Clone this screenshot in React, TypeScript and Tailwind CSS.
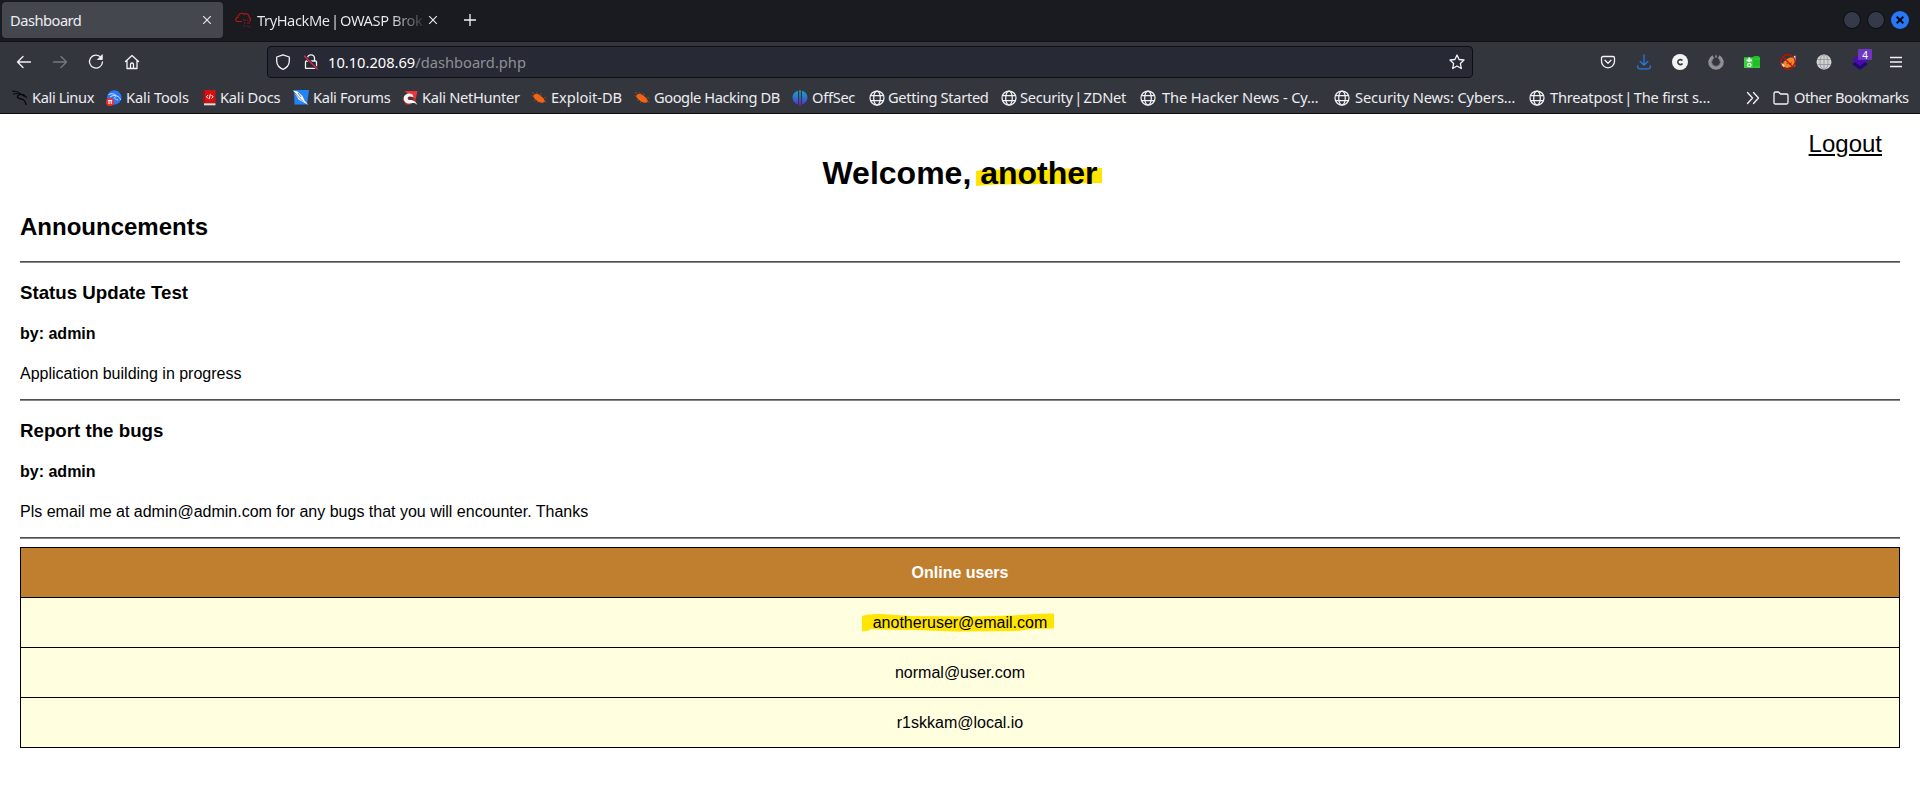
import React from "react";

type IconProps = { className?: string };

const KaliDragon = ({ className = "" }: IconProps) => (
  <svg viewBox="0 0 16 16" className={`size-4 shrink-0 ${className}`} fill="none" stroke="#050607">
    <path d="M0 1.200C4 1 7 1.800 9 4.200M1 4.200C4 3 6.500 3.400 9 4.500" strokeWidth="1" />
    <path d="M9 4.300C5 4.600 4.500 7.500 7 8.300C10 9.200 13 9 14.200 15" strokeWidth="1.300" />
    <path d="M8.500 4.200L12 4.600L15 7.600L12 6.300Z" fill="#050607" strokeWidth=".7" />
  </svg>
);

const KaliTools = () => (
  <svg viewBox="0 0 16 16" className="size-4 shrink-0">
    <circle cx="8.300" cy="7.500" r="7.200" fill="#2777f6" />
    <path d="M2.500 4.500C6 3 9 4 10.500 6M4 7C7 5 9 5.500 10.500 6C13 6.500 14 8 14.500 10M10 6.500C7 7.500 9 9.500 12 10" fill="none" stroke="#cfe3ff" strokeWidth="1" />
    <circle cx="4" cy="12" r="4" fill="#ee2e2e" />
    <path d="M2 10.500H6.200M3 10.500V14M5.200 10.500V14" stroke="#fff" strokeWidth="1" fill="none" />
  </svg>
);

const KaliDocs = () => (
  <svg viewBox="0 0 16 16" className="size-4 shrink-0">
    <path d="M1.500 0H13.500V13H1.500Z" fill="#d60f12" />
    <path d="M1.500 0H3V13.500H1.500Z" fill="#a80b10" />
    <path d="M2 13.300H13.500V15.300H2Z" fill="#e9dada" />
    <path d="M6 5L4.500 6.800L6 8.500M9.500 5L11 6.800L9.500 8.500M8.300 4.200L7.200 9.200" stroke="#fff" strokeWidth="1" fill="none" />
  </svg>
);

const KaliForums = () => (
  <svg viewBox="0 0 16 16" className="size-4 shrink-0">
    <path d="M1 0H16L14 14.500H1.500Z" fill="#2583fa" />
    <path d="M0 .5L4.500 1.500L9.500 6L11.500 10.500L15.500 15L10 12L5.500 9.500L3.500 6Z" fill="#f4f6f8" />
    <path d="M1 2L5 6.500L10 11.500M5 3L8 7" stroke="#69727e" strokeWidth=".9" fill="none" />
  </svg>
);

const KaliNetHunter = () => (
  <svg viewBox="0 0 16 16" className="size-4 shrink-0">
    <path d="M2.500 1H15.500L13.500 10L9 6L6 4Z" fill="#ee3438" />
    <path d="M.5 9L4 14.500H9L5 10Z" fill="#e5282c" />
    <path d="M9 8L13.500 10L14 12Z" fill="#e5282c" />
    <path d="M10.500 4.500C7.500 2.500 3 3.500 1.800 7C.8 10.800 4 14 8 13.500C10.500 13 12.500 12.500 15.300 14.800C13.500 11 11 10 8 10C5 9.800 5 6.800 7.500 6.500L11.500 7Z" fill="#f7f7f7" />
    <path d="M8 7.500C6 7.500 6 9.200 8.500 9.300" stroke="#a51b25" strokeWidth="1.200" fill="none" />
  </svg>
);

const ExploitBug = () => (
  <svg viewBox="0 0 16 16" className="size-4 shrink-0">
    <path d="M1 2L4.500 5M.5 5.500L4 7M5 2L7 5M9.500 3.200L10 6M13 7.500L15.500 8M12.500 10L15.500 12.500M3 10.500L5.500 9.500M6 13L8 11" stroke="#9b4f28" strokeWidth=".8" fill="none" />
    <path d="M2.500 5.500C4 3.500 7 3.800 9 5.500C12 7.300 14.200 9.500 13.500 12.300C10 13.500 7 12 5 9.800C3.500 8.500 2 7.500 2.500 5.500Z" fill="#f36314" />
  </svg>
);

const OffSec = () => (
  <svg viewBox="0 0 16 16" className="size-4 shrink-0">
    <defs>
      <linearGradient id="offsec" x1="0" y1="0" x2="0" y2="1">
        <stop offset="0" stopColor="#12a9c4" />
        <stop offset=".55" stopColor="#3568ce" />
        <stop offset="1" stopColor="#6c20ce" />
      </linearGradient>
    </defs>
    <path d="M6 .7V14.500C2.500 13.500 .5 11 .5 7.600C.5 4.300 2.500 1.700 6 .7ZM7.200 .3H8.800V15.700H7.200ZM10 .7C13.500 1.700 15.500 4.300 15.500 7.600C15.500 11 13.500 13.500 10 14.500Z" fill="url(#offsec)" />
  </svg>
);

const Globe = () => (
  <svg viewBox="0 0 16 16" className="size-4 shrink-0" fill="none" stroke="#f1f1f3" strokeWidth="1.250">
    <circle cx="8" cy="8" r="7" />
    <ellipse cx="8" cy="8" rx="3.300" ry="7" />
    <path d="M1.400 5.500H14.600M1.400 10.500H14.600" />
  </svg>
);

const Close = () => (
  <svg viewBox="0 0 10 10" className="size-[10px] shrink-0" fill="none" stroke="#e8e8ea" strokeWidth="1.150">
    <path d="M1.200 1.200L8.800 8.800M8.800 1.200L1.200 8.800" />
  </svg>
);

const TryHackMe = () => (
  <svg viewBox="0 0 16 16" className="size-4 shrink-0" fill="none" stroke="#c11118" strokeWidth="1.100">
    <path d="M7 9.500H3.200C.2 9.500 0 5.500 3 5.300C3 2 6.500 0 9 2.300C11 .8 14.500 2 14 5.200C16 6 16 8.500 14.500 9.300" />
    <path d="M8 8H11M12 8H13.500M9 11H10.500M12 11H15M8.500 14H10M11.500 14H12.500M13.500 14.800H15.500" strokeWidth="1" opacity=".75" />
  </svg>
);

const line = { fill: "none", stroke: "#f4f4f6", strokeWidth: 1.3, strokeLinecap: "round", strokeLinejoin: "round" } as const;

const Glyph = ({ d, className = "" }: { d: string; className?: string }) => (
  <svg viewBox="0 0 16 16" className={`size-4 shrink-0 ${className}`} {...line}>
    <path d={d} />
  </svg>
);

const Reload = () => (
  <svg viewBox="0 0 16 16" className="size-4 shrink-0" {...line}>
    <path d="M13 3.400A6.500 6.500 0 1 0 14.500 8" />
    <path d="M14.300 1V5.500H9.800Z" fill="#f4f4f6" strokeWidth=".8" />
  </svg>
);

const InsecureLock = () => (
  <svg viewBox="0 0 16 16" className="size-4 shrink-0" {...line}>
    <path d="M4.500 7V4.300A3.500 3.500 0 0 1 11.500 4.300V7M3.500 7H12.500Q13.500 7 13.500 8V14.300H2.500V8Q2.500 7 3.500 7Z" />
    <path d="M1.500 2L14.500 15" stroke="#272934" strokeWidth="2.600" />
    <path d="M1.300 2L14.300 15" stroke="#e22850" strokeWidth="1.300" />
  </svg>
);

const Toolbar = () => (
  <div className="flex items-center">
    <Glyph className="mr-5" d="M3.100 2.500H12.900Q14.500 2.500 14.500 4V7.300A6.500 6.500 0 0 1 1.500 7.300V4Q1.500 2.500 3.100 2.500ZM5 6.300L8 9.200L11 6.300" />
    <svg viewBox="0 0 16 16" className="mr-5 size-4" fill="none" stroke="#2878e8" strokeWidth="1.300" strokeLinecap="round">
      <path d="M8 1V11M4.200 7.500L8 11.200L11.800 7.500M1.700 12V13Q1.700 14.800 3.500 14.800H12.500Q14.300 14.800 14.300 13V12" />
    </svg>
    <svg viewBox="0 0 16 16" className="mr-5 size-4">
      <circle cx="8" cy="8" r="8" fill="#f3f3f4" />
      <path d="M10.500 6.600A2.600 2.500 0 1 0 10.500 9.600" fill="none" stroke="#34363e" strokeWidth="1.600" />
    </svg>
    <svg viewBox="0 0 16 16" className="mr-5 size-4" fill="none">
      <path d="M5.300 2.700A6 6 0 1 0 10.700 2.700" stroke="#919194" strokeWidth="3.400" />
      <path d="M4.600 5.500A4.200 4.200 0 1 0 11.400 5.500" stroke="#717275" strokeWidth=".8" />
      <path d="M8 .3L9.300 3.500H6.700Z" fill="#8a8a8d" />
    </svg>
    <svg viewBox="0 0 16 16" className="mr-5 size-4">
      <path d="M0 3.500H8.500L10 2H14.500L16 3.500V14H0Z" fill="#20bd24" />
      <path d="M0 3.500H9V14H0Z" fill="#36d23a" />
      <path d="M2.500 6.300H8M5.300 3.600V8" stroke="#fff" strokeWidth="1.800" />
      <circle cx="5.300" cy="11" r="1.700" fill="none" stroke="#fff" strokeWidth="1.200" />
      <path d="M10 5H16M10 13H16" stroke="#3fe044" strokeWidth=".8" />
    </svg>
    <svg viewBox="0 0 16 16" className="mr-5 size-4">
      <path d="M7 5L10 3.500H14L15 8L12 12.500L7 14L3 12.500L3.500 8Z" fill="#ef8a1e" />
      <path d="M.8 8.500L4.500 11L4 13.500L1.500 12ZM13.500 2.500L15.500 1.500L15.500 7L14 6ZM14.500 10L15.500 12L13 13Z" fill="#eee4dc" />
      <path d="M6.500 9L8 10M9.500 10.500L12 8.500" stroke="#8b3f14" strokeWidth="1" />
      <circle cx="8" cy="8" r="7.300" fill="none" stroke="#c90b0b" strokeWidth="1.200" />
      <path d="M3 3L13 13" stroke="#c90b0b" strokeWidth="1.200" />
    </svg>
    <svg viewBox="0 0 16 16" className="mr-5 size-4" fill="none" stroke="#909195" strokeWidth=".8">
      <circle cx="8" cy="8" r="7.500" fill="#d2d2d3" stroke="none" />
      <path d="M8 .5V15.500M1 5.500H15M1 10.500H15" />
      <ellipse cx="8" cy="8" rx="4" ry="7.500" />
    </svg>
    <div className="relative mr-5 size-4">
      <svg viewBox="0 0 16 16" className="size-4">
        <path d="M0 10L3 8H13L16 10L8 16Z" fill="#23086f" />
        <path d="M0 6L8 0L16 6L8 12Z" fill="#4b0caf" />
      </svg>
      <span className="absolute -top-[5px] left-[6px] flex h-[11px] w-[14px] items-center justify-center rounded-[1px] bg-[#6d38c0] text-[10px] leading-none text-white">4</span>
    </div>
    <svg viewBox="0 0 16 16" className="size-4" stroke="#f4f4f6" strokeWidth="1.300">
      <path d="M2 3.500H14M2 8H14M2 12.500H14" />
    </svg>
  </div>
);

const Pipe = () => <span className="-mx-[2px]">|</span>;

const bookmarks: { label: React.ReactNode; icon: React.ReactNode; slot: string; text: string }[] = [
  { label: "Kali Linux", icon: <KaliDragon />, slot: "w-[94px]", text: "ml-1 tracking-[-0.4px]" },
  { label: "Kali Tools", icon: <KaliTools />, slot: "w-[96px]", text: "ml-1 tracking-[-0.15px]" },
  { label: "Kali Docs", icon: <KaliDocs />, slot: "w-[91px]", text: "ml-[2px] tracking-[-0.22px]" },
  { label: "Kali Forums", icon: <KaliForums />, slot: "w-[109px]", text: "ml-1 tracking-[-0.33px]" },
  { label: "Kali NetHunter", icon: <KaliNetHunter />, slot: "w-[129px]", text: "ml-1 tracking-[-0.3px]" },
  { label: "Exploit-DB", icon: <ExploitBug />, slot: "w-[103px]", text: "ml-1 tracking-[-0.06px]" },
  { label: "Google Hacking DB", icon: <ExploitBug />, slot: "w-[158px]", text: "ml-1 tracking-[-0.43px]" },
  { label: "OffSec", icon: <OffSec />, slot: "w-[77px]", text: "ml-1 tracking-[-0.3px]" },
  { label: "Getting Started", icon: <Globe />, slot: "w-[132px]", text: "ml-[3px] tracking-[-0.32px]" },
  { label: <>Security <Pipe /> ZDNet</>, icon: <Globe />, slot: "w-[139px]", text: "ml-[3px] tracking-[-0.28px]" },
  { label: "The Hacker News - Cy…", icon: <Globe />, slot: "w-[194px]", text: "ml-[6px] tracking-[-0.12px]" },
  { label: "Security News: Cybers…", icon: <Globe />, slot: "w-[195px]", text: "ml-[5px] tracking-[-0.12px]" },
  { label: <>Threatpost <Pipe /> The first s…</>, icon: <Globe />, slot: "w-[217px]", text: "ml-[5px] tracking-[-0.22px]" },
];

const posts = [
  { title: "Status Update Test", author: "admin", body: "Application building in progress" },
  { title: "Report the bugs", author: "admin", body: "Pls email me at admin@admin.com for any bugs that you will encounter. Thanks" },
];

const Rule = () => <div className="h-[2px] border-t border-b border-t-[#505050] border-b-[#868686]" />;

function Browser() {
  return (
    <header className="h-[114px] border-b border-[#0c0c0e] bg-[#34363e] font-['Noto_Sans',sans-serif] text-[14.67px] text-[#ededf0]">
      <div className="flex h-[42px] items-center border-b border-[#101115] bg-[#1a1b20]">
        <div className="mb-px ml-[2px] flex h-9 w-[221px] items-center justify-between rounded-[4px] bg-[#45474f] pr-[11px] pl-[8px]">
          <span className="tracking-[-0.5px]">Dashboard</span>
          <Close />
        </div>
        <div className="mb-px ml-[12px] flex w-[203px] items-center justify-between">
          <span className="flex items-center">
            <TryHackMe />
            <span className="ml-[6px] bg-[linear-gradient(to_right,#ededf0_80%,#3a3b40)] bg-clip-text tracking-[-0.42px] whitespace-nowrap text-transparent">TryHackMe <Pipe /> OWASP Brok</span>
          </span>
          <Close />
        </div>
        <svg viewBox="0 0 12 12" className="mb-px ml-[26px] size-3" stroke="#f4f4f6" strokeWidth="1.300">
          <path d="M6 0V12M0 6H12" />
        </svg>
        <div className="mr-[11px] mb-[2px] ml-auto flex gap-[6px]">
          <span className="size-[18px] rounded-full border border-[#0b0c0f] bg-[#343a47]" />
          <span className="size-[18px] rounded-full border border-[#0b0c0f] bg-[#343a47]" />
          <span className="flex size-[18px] items-center justify-center rounded-full bg-[#2777f7]">
            <svg viewBox="0 0 8 8" className="size-2" stroke="#090d14" strokeWidth="2">
              <path d="M.7 .7L7.300 7.300M7.300 .7L.7 7.300" />
            </svg>
          </span>
        </div>
      </div>

      <div className="flex h-10 items-center pr-4 pl-4">
        <div className="flex items-center gap-5">
          <Glyph d="M14.500 8H1.500M7 2.500L1.500 8L7 13.500" />
          <Glyph className="opacity-35" d="M1.500 8H14.500M9 2.500L14.500 8L9 13.500" />
          <Reload />
          <Glyph d="M1.500 7.500L8 1.500L14.500 7.500M3 6.500V14.500H13V6.500M6.500 14.500V10.500Q6.500 9 8 9Q9.500 9 9.500 10.500V14.500" />
        </div>
        <div className="ml-[127px] flex h-8 w-[1206px] items-center rounded-[4px] border border-[#0e0f13] bg-[#272934] pr-[7px] pl-[7px]">
          <Glyph d="M8 .8L14.300 3V7C14.300 11.500 11 14.500 8 15.300C5 14.500 1.700 11.500 1.700 7V3Z" />
          <span className="ml-3 flex"><InsecureLock /></span>
          <span className="ml-[9px] text-[#8f9097]"><span className="text-white">10.10.208.69</span>/dashboard.php</span>
          <Glyph className="ml-auto" d="M8 1L10.100 5.500L15 6L11.400 9.500L12.300 14.500L8 12L3.700 14.500L4.600 9.500L1 6L5.900 5.500Z" />
        </div>
        <div className="ml-auto"><Toolbar /></div>
      </div>

      <nav className="mt-px flex h-[30px] items-center pl-3 whitespace-nowrap">
        {bookmarks.map((b, i) => (
          <a key={i} className={`flex shrink-0 items-center ${b.slot}`}>
            {b.icon}
            <span className={`-translate-y-px ${b.text}`}>{b.label}</span>
          </a>
        ))}
        <Glyph className="-ml-px" d="M2.500 2.500L7.500 8L2.500 13.500M8.500 2.500L13.500 8L8.500 13.500" />
        <Glyph className="ml-[12px]" d="M1 12.500V3.500Q1 2 2.500 2H5.500L7.500 4H13.500Q15 4 15 5.500V12.500Q15 14 13.500 14H2.500Q1 14 1 12.500Z" />
        <span className="ml-[5px] -translate-y-px tracking-[-0.48px]">Other Bookmarks</span>
      </nav>
    </header>
  );
}

export default function App() {
  return (
    <div className="min-h-[787px] bg-white text-black">
      <Browser />
      <main className="px-5 font-['Liberation_Sans',Arial,sans-serif] text-[16px]">
        <div className="flex h-[41px] justify-end pt-[16px] pr-[18px]">
          <a className="text-[24px] leading-[27px] underline">Logout</a>
        </div>
        <h1 className="flex justify-center text-[32px] leading-9 font-bold">
          <span>Welcome,&nbsp;</span>
          <span className="relative isolate">
            another
            <svg viewBox="0 0 126 20" className="absolute top-[12px] -left-[4px] -z-10 h-5 w-[126px]">
              <path d="M0 4L6 3L60 2L126 1V16L70 17L20 17.500L0 19Z" fill="#ffe500" />
            </svg>
          </span>
        </h1>
        <h2 className="mt-[22px] mb-[21px] text-[24px] leading-[27px] font-bold">Announcements</h2>
        <Rule />
        {posts.map((p) => (
          <article key={p.title}>
            <h3 className="mt-[19px] text-[18.72px] leading-[21px] font-bold">{p.title}</h3>
            <h4 className="mt-[22px] leading-[18px] font-bold">by: {p.author}</h4>
            <p className="mt-[22px] mb-[16px] leading-[18px]">{p.body}</p>
            <Rule />
          </article>
        ))}
        <table className="mt-2 w-full border-collapse text-center leading-[18px]">
          <thead>
            <tr className="h-[50px] text-white">
              <th className="border border-black bg-[#bf7f2f] p-0">Online users</th>
            </tr>
          </thead>
          <tbody>
            <tr className="h-[50px]">
              <td className="border border-black bg-[#ffffe0] p-0">
                <span className="relative isolate">
                  anotheruser@email.com
                  <svg viewBox="0 0 192 19" className="absolute -top-[1px] -left-[11px] -z-10 h-[19px] w-[192px]">
                    <path d="M0 3L6 1.500L18 1L50 3L110 3.500L150 2.500L175 1L192 .5V15.500L170 16L155 18L95 18.500L52 17L20 16.500L9 16L5 18L0 18.500Z" fill="#ffe500" />
                  </svg>
                </span>
              </td>
            </tr>
            <tr className="h-[50px]"><td className="border border-black bg-[#ffffe0] p-0">normal@user.com</td></tr>
            <tr className="h-[50px]"><td className="border border-black bg-[#ffffe0] p-0">r1skkam@local.io</td></tr>
          </tbody>
        </table>
      </main>
    </div>
  );
}
